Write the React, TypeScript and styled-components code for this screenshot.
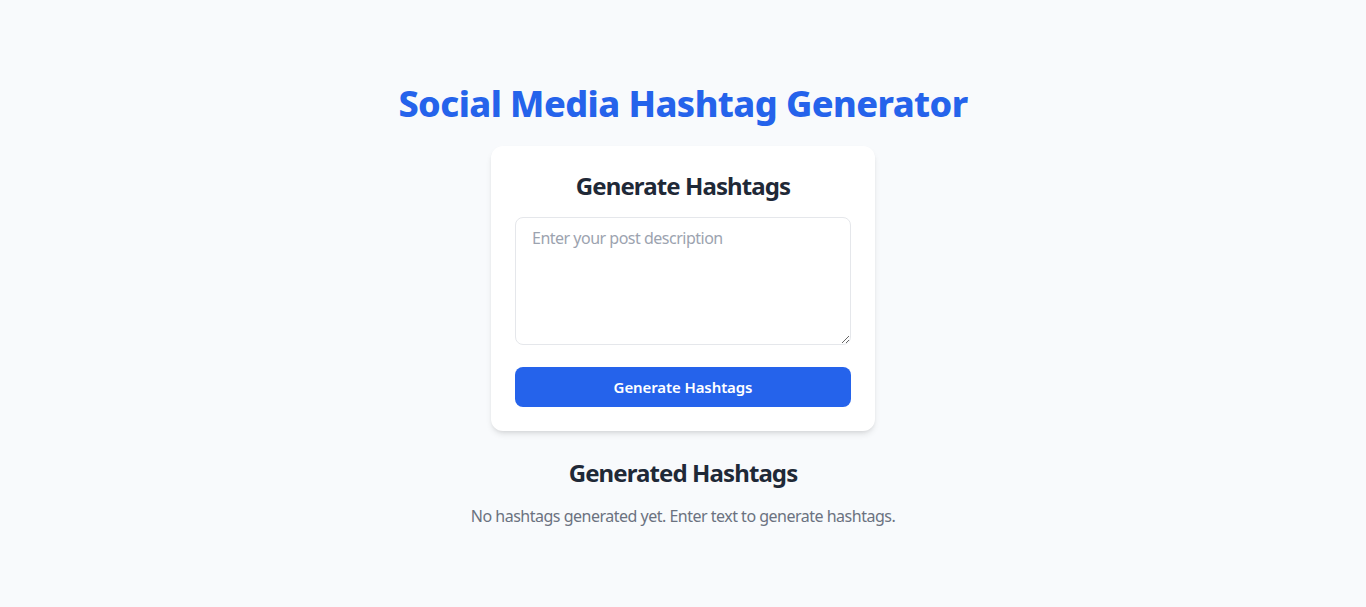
import React, { useState } from "react";
import styled, { createGlobalStyle } from "styled-components";

const Global = createGlobalStyle`
  html, body {
    margin: 0;
    padding: 0;
    background: #f8fafc;
    font-family: "Noto Sans", "Open Sans", sans-serif;
    color: #1f2937;
  }
  * { box-sizing: border-box; }
`;

const Page = styled.main`
  min-height: 607px;
  display: flex;
  flex-direction: column;
  align-items: center;
  padding-top: 84px;
`;

const Title = styled.h1`
  margin: 0 0 22px;
  font-size: 36px;
  line-height: 40px;
  font-weight: 800;
  letter-spacing: -0.55px;
  color: #2563eb;
`;

const Card = styled.section`
  width: 384px;
  background: #ffffff;
  border-radius: 12px;
  box-shadow: 0 4px 6px -1px rgba(0, 0, 0, 0.1), 0 2px 4px -2px rgba(0, 0, 0, 0.1);
  padding: 24px;
  display: flex;
  flex-direction: column;
`;

const Heading = styled.h2<{ $mt?: number }>`
  margin: ${(p) => p.$mt ?? 0}px 0 0;
  font-size: 24px;
  line-height: 32px;
  font-weight: 700;
  letter-spacing: -0.9px;
  color: #1f2937;
  text-align: center;
`;

const TextArea = styled.textarea`
  margin-top: 15px;
  width: 100%;
  height: 128px;
  border: 1px solid #e5e7eb;
  border-radius: 8px;
  padding: 8px 16px;
  font-family: inherit;
  font-size: 16px;
  line-height: 24px;
  letter-spacing: -0.5px;
  color: #1f2937;
  outline: none;
  resize: vertical;
  display: block;
  &::placeholder { color: #9ca3af; }
`;

const Button = styled.button`
  margin-top: 22px;
  height: 40px;
  width: 100%;
  border: none;
  border-radius: 8px;
  background: #2563eb;
  color: #ffffff;
  font-family: inherit;
  font-size: 15px;
  font-weight: 600;
  letter-spacing: -0.1px;
  cursor: pointer;
`;

const Empty = styled.p`
  margin: 15px 0 0;
  font-size: 16px;
  line-height: 24px;
  letter-spacing: -0.5px;
  color: #6b7280;
  text-align: center;
`;

export default function App() {
  const [text, setText] = useState("");
  return (
    <>
      <Global />
      <Page>
        <Title>Social Media Hashtag Generator</Title>
        <Card>
          <Heading>Generate Hashtags</Heading>
          <TextArea
            placeholder="Enter your post description"
            value={text}
            onChange={(e) => setText(e.target.value)}
          />
          <Button>Generate Hashtags</Button>
        </Card>
        <Heading $mt={26}>Generated Hashtags</Heading>
        <Empty>No hashtags generated yet. Enter text to generate hashtags.</Empty>
      </Page>
    </>
  );
}
